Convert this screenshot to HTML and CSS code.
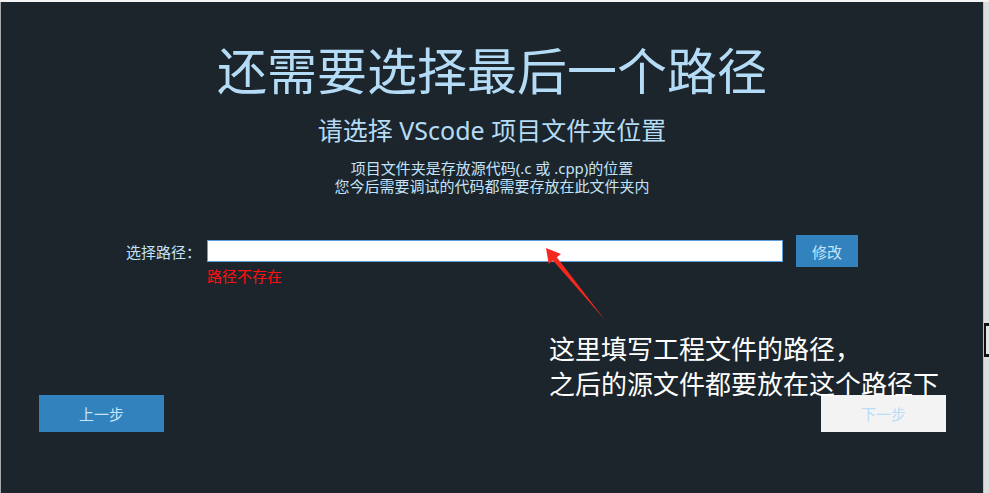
FILE: index.html
```html
<!DOCTYPE html>
<html lang="zh-CN">
<head>
<meta charset="utf-8">
<title>选择路径</title>
<link rel="stylesheet" href="styles.css">
</head>
<body>
<div class="screen">
  <div class="topbar"></div>
  <div class="main">
    <div class="edge-left"></div>
    <div class="panel">
      <h1 class="title">还需要选择最后一个路径</h1>
      <h2 class="subtitle">请选择 VScode 项目文件夹位置</h2>
      <div class="desc">
        <div class="desc-line">项目文件夹是存放源代码(.c 或 .cpp)的位置</div>
        <div class="desc-line">您今后需要调试的代码都需要存放在此文件夹内</div>
      </div>
      <div class="form-row">
        <label class="label">选择路径：</label>
        <input class="path-input" type="text" value="">
        <button class="btn btn-edit">修改</button>
      </div>
      <div class="error">路径不存在</div>
      <div class="nav">
        <button class="btn btn-nav btn-prev">上一步</button>
        <button class="btn btn-nav btn-next">下一步</button>
      </div>

      <svg class="arrow" width="70" height="85" viewBox="0 0 70 85">
        <polygon points="6,8 21,14 16.8,17.2 65,80 13,20.4 8.7,23.9" fill="#f5281e"/>
      </svg>
      <div class="note">
        <div class="note-line">这里填写工程文件的路径，</div>
        <div class="note-line">之后的源文件都要放在这个路径下</div>
      </div>
    </div>
    <div class="edge-right"><div class="bracket"></div></div>
  </div>
</div>
</body>
</html>
```
FILE: styles.css
```css
html, body {
  margin: 0;
  padding: 0;
  background: #1c252c;
}
.screen {
  width: 989px;
  height: 493px;
  display: flex;
  flex-direction: column;
  overflow: hidden;
  font-family: "Noto Sans", "Noto Sans CJK SC", sans-serif;
}
.topbar {
  height: 2px;
  background: #f4f4f4;
  flex: none;
}
.main {
  flex: 1;
  display: flex;
}
.edge-left {
  width: 1px;
  background: #a9a9a9;
}
.edge-right {
  width: 6px;
  background: #dddddd;
  border-left: 1px solid #c2c2c2;
  box-sizing: border-box;
}
.bracket {
  margin-top: 321px;
  height: 34px;
  box-sizing: border-box;
  border-top: 3px solid #111;
  border-bottom: 3px solid #111;
  border-left: 2px solid #111;
  background: #e6e6e6;
}
.panel {
  position: relative;
  flex: 1;
  background: #1c252c;
  display: flex;
  flex-direction: column;
  align-items: center;
  padding-top: 36px;
  box-sizing: border-box;
}
.title {
  margin: 0;
  font-size: 50px;
  line-height: 60px;
  font-weight: normal;
  color: #b5dcf6;
  font-family: "Noto Sans CJK SC", sans-serif;
}
.subtitle {
  margin: 16px 0 0;
  font-size: 25px;
  line-height: 32px;
  font-weight: normal;
  color: #b5dcf6;
}
.desc {
  margin: 13px 0 0;
  font-size: 15px;
  color: #c2e3f9;
  text-align: center;
}
.desc-line {
  line-height: 18px;
  height: 18px;
}
.form-row {
  align-self: stretch;
  display: flex;
  align-items: center;
  margin-top: 40px;
  padding-left: 125px;
  height: 32px;
}
.label {
  font-size: 15px;
  color: #c2e3f9;
  width: 81px;
}
.path-input {
  width: 576px;
  height: 22px;
  box-sizing: border-box;
  border: 1px solid #5d9dd8;
  background: #fff;
  padding: 0 4px;
  margin: 0;
  outline: none;
}
.btn {
  border: none;
  margin: 0;
  padding: 0;
  font-family: "Noto Sans CJK SC", sans-serif;
  font-size: 15px;
  cursor: pointer;
}
.btn-edit {
  margin-left: 13px;
  width: 62px;
  height: 32px;
  background: #3282bd;
  color: #c6e5fb;
}
.error {
  align-self: stretch;
  padding-left: 206px;
  font-size: 15px;
  line-height: 18px;
  color: #ff0f0f;
}
.nav {
  align-self: stretch;
  display: flex;
  justify-content: space-between;
  padding: 0 37px 0 38px;
  margin-top: 110px;
}
.btn-nav {
  width: 125px;
  height: 37px;
}
.btn-prev {
  background: #3282bd;
  color: #c6e5fb;
}
.btn-next {
  background: #f3f3f3;
  color: #b9dcf7;
}
.arrow {
  position: absolute;
  left: 539px;
  top: 238px;
}
.note {
  position: absolute;
  left: 548px;
  top: 328px;
  font-family: "Noto Sans CJK SC", sans-serif;
  font-size: 26px;
  color: #ffffff;
  white-space: nowrap;
}
.note-line {
  line-height: 35px;
  height: 35px;
}
```
